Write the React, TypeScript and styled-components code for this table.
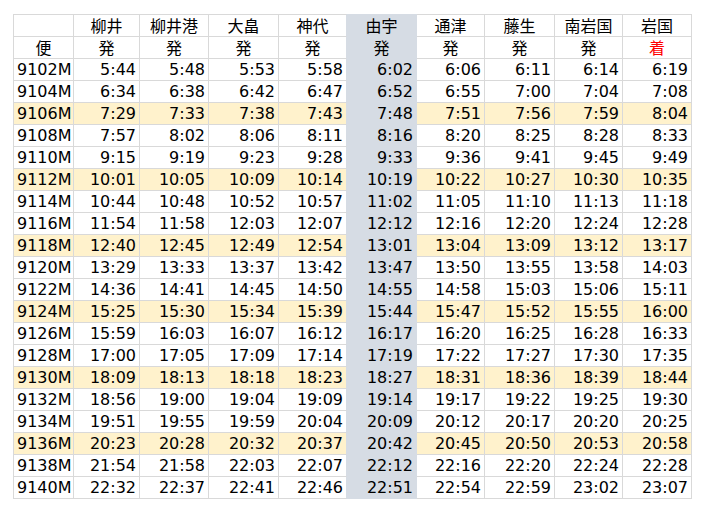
import React from "react";
import styled, { createGlobalStyle, css } from "styled-components";

const Global = createGlobalStyle`
  html, body { margin: 0; padding: 0; background: #ffffff; }
  body { font-family: "DejaVu Sans", "Noto Sans CJK JP", sans-serif; color: #000; }
`;

const GRID = "#d9d9d9";
const GRAY = "#d6dce4";
const YELLOW = "#fff2cc";

const Page = styled.div`
  padding: 14px 0 0 13px;
`;

const Grid = styled.div`
  display: grid;
  grid-template-columns: 61px 66px 69px 70px 68px 70px 68px 70px 68px 69px;
  width: max-content;
`;

type CellProps = {
  $col: number;
  $first?: boolean;
  $fill?: "yellow" | "none";
  $align?: "left" | "right" | "center";
  $red?: boolean;
};

const Cell = styled.div<CellProps>`
  box-sizing: border-box;
  height: ${(p) => (p.$first ? 23 : 22)}px;
  line-height: 21px;
  font-size: 16px;
  white-space: nowrap;
  border-right: 1px solid ${GRID};
  border-bottom: 1px solid ${GRID};
  ${(p) => p.$first && css`border-top: 1px solid ${GRID};`}
  ${(p) => p.$col === 0 && css`border-left: 1px solid ${GRID};`}
  background: ${(p) => (p.$fill === "yellow" ? YELLOW : "#ffffff")};
  text-align: ${(p) => p.$align ?? "right"};
  padding: ${(p) => (p.$align === "left" ? "0 0 0 3px" : p.$align === "center" ? "0" : "0 3px 0 0")};
  color: ${(p) => (p.$red ? "#ff0000" : "#000")};
  ${(p) => p.$col === 4 && css`border-right-color: ${GRAY};`}
  ${(p) =>
    p.$col === 5 &&
    css`
      background: ${GRAY};
      border-color: ${GRAY};
    `}
`;

const HeadText = styled.span`
  display: inline-block;
  vertical-align: top;
  height: 21px;
  font-family: "Noto Sans CJK JP", sans-serif;
  font-size: 16px;
  line-height: 21px;
`;

const stations = ["柳井", "柳井港", "大畠", "神代", "由宇", "通津", "藤生", "南岩国", "岩国"];

const rows: string[] = [
  "9102M 5:44 5:48 5:53 5:58 6:02 6:06 6:11 6:14 6:19",
  "9104M 6:34 6:38 6:42 6:47 6:52 6:55 7:00 7:04 7:08",
  "9106M 7:29 7:33 7:38 7:43 7:48 7:51 7:56 7:59 8:04",
  "9108M 7:57 8:02 8:06 8:11 8:16 8:20 8:25 8:28 8:33",
  "9110M 9:15 9:19 9:23 9:28 9:33 9:36 9:41 9:45 9:49",
  "9112M 10:01 10:05 10:09 10:14 10:19 10:22 10:27 10:30 10:35",
  "9114M 10:44 10:48 10:52 10:57 11:02 11:05 11:10 11:13 11:18",
  "9116M 11:54 11:58 12:03 12:07 12:12 12:16 12:20 12:24 12:28",
  "9118M 12:40 12:45 12:49 12:54 13:01 13:04 13:09 13:12 13:17",
  "9120M 13:29 13:33 13:37 13:42 13:47 13:50 13:55 13:58 14:03",
  "9122M 14:36 14:41 14:45 14:50 14:55 14:58 15:03 15:06 15:11",
  "9124M 15:25 15:30 15:34 15:39 15:44 15:47 15:52 15:55 16:00",
  "9126M 15:59 16:03 16:07 16:12 16:17 16:20 16:25 16:28 16:33",
  "9128M 17:00 17:05 17:09 17:14 17:19 17:22 17:27 17:30 17:35",
  "9130M 18:09 18:13 18:18 18:23 18:27 18:31 18:36 18:39 18:44",
  "9132M 18:56 19:00 19:04 19:09 19:14 19:17 19:22 19:25 19:30",
  "9134M 19:51 19:55 19:59 20:04 20:09 20:12 20:17 20:20 20:25",
  "9136M 20:23 20:28 20:32 20:37 20:42 20:45 20:50 20:53 20:58",
  "9138M 21:54 21:58 22:03 22:07 22:12 22:16 22:20 22:24 22:28",
  "9140M 22:32 22:37 22:41 22:46 22:51 22:54 22:59 23:02 23:07",
];

const highlighted = new Set(["9106M", "9112M", "9118M", "9124M", "9130M", "9136M"]);

export default function App() {
  return (
    <>
      <Global />
      <Page>
        <Grid>
          <Cell $col={0} $first $align="center" />
          {stations.map((s, i) => (
            <Cell key={"s" + i} $col={i + 1} $first $align="center">
              <HeadText>{s}</HeadText>
            </Cell>
          ))}
          <Cell $col={0} $align="center">
            <HeadText>便</HeadText>
          </Cell>
          {stations.map((s, i) => (
            <Cell key={"d" + i} $col={i + 1} $align="center" $red={i === stations.length - 1}>
              <HeadText>{i === stations.length - 1 ? "着" : "発"}</HeadText>
            </Cell>
          ))}
          {rows.map((r) => {
            const parts = r.split(" ");
            const fill = highlighted.has(parts[0]) ? "yellow" : "none";
            return parts.map((v, i) => (
              <Cell key={parts[0] + i} $col={i} $fill={fill} $align={i === 0 ? "left" : "right"}>
                {v}
              </Cell>
            ));
          })}
        </Grid>
      </Page>
    </>
  );
}
